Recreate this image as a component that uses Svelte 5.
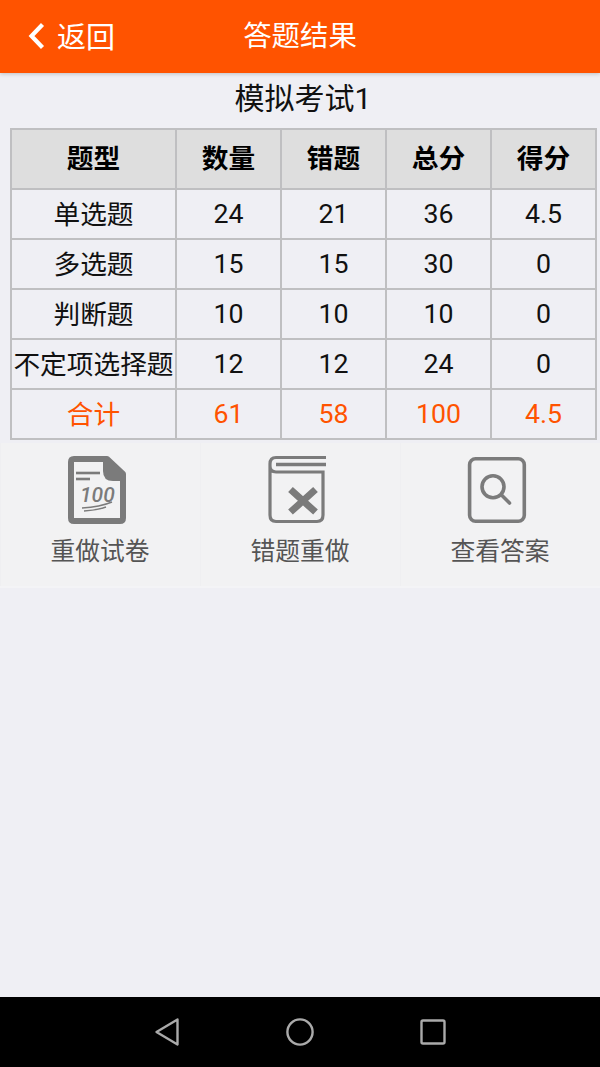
<script>
    const rows = [
        { name: "单选题", count: 24, wrong: 21, total: 36, score: 4.5 },
        { name: "多选题", count: 15, wrong: 15, total: 30, score: 0 },
        { name: "判断题", count: 10, wrong: 10, total: 10, score: 0 },
        { name: "不定项选择题", count: 12, wrong: 12, total: 24, score: 0 }
    ];
</script>

<div class="screen">
    <header class="topbar">
        <div class="back">
            <svg width="18" height="28" viewBox="0 0 18 28">
                <path d="M15.5 2.5 L4.5 14 L15.5 25.5" fill="none" stroke="#fff" stroke-width="4.2" />
            </svg>
            <span>返回</span>
        </div>
        <h1>答题结果</h1>
    </header>

    <main class="content">
        <h2>模拟考试1</h2>

        <table>
            <colgroup>
                <col class="col-name" />
                <col /><col /><col /><col />
            </colgroup>
            <thead>
                <tr>
                    <th>题型</th>
                    <th>数量</th>
                    <th>错题</th>
                    <th>总分</th>
                    <th>得分</th>
                </tr>
            </thead>
            <tbody>
                {#each rows as row}
                    <tr>
                        <td class="name">{row.name}</td>
                        <td>{row.count}</td>
                        <td>{row.wrong}</td>
                        <td>{row.total}</td>
                        <td>{row.score}</td>
                    </tr>
                {/each}
                <tr class="sum">
                    <td class="name">合计</td>
                    <td>61</td>
                    <td>58</td>
                    <td>100</td>
                    <td>4.5</td>
                </tr>
            </tbody>
        </table>

        <div class="actions">
            <div class="action">
                <svg width="90" height="90" viewBox="5 0 90 90">
                    <path d="M24 14 H57 L73 29 V73 Q73 76 70 76 H24 Q21 76 21 73 V17 Q21 14 24 14 Z" fill="none" stroke="#7b7b7b" stroke-width="6" stroke-linejoin="round" />
                    <path d="M53 12 H56 L76 30 V36 H63 Q53 36 53 26 Z" fill="#7b7b7b" />
                    <path d="M26 28 H50" stroke="#7b7b7b" stroke-width="2.6" />
                    <path d="M26 34 H40" stroke="#7b7b7b" stroke-width="2.6" />
                    <text class="hundred" x="30" y="56.5">100</text>
                    <path d="M32 63 Q50 62 62 57 M34 66 Q48 65 56 62" fill="none" stroke="#7b7b7b" stroke-width="1.4" />
                </svg>
                <span>重做试卷</span>
            </div>
            <div class="action">
                <svg width="90" height="90" viewBox="0 0 90 90">
                    <path d="M71 12.5 H21 Q15 12.5 15 19 V70 Q15 76.5 21 76.5 H62 Q68 76.5 68 70 V27 H21 Q15 27 15 21" fill="none" stroke="#7b7b7b" stroke-width="3.2" />
                    <path d="M21 19.5 H71" stroke="#7b7b7b" stroke-width="3.4" />
                    <path d="M35.5 44.5 L60.5 67 M60.5 44.5 L35.5 67" stroke="#7b7b7b" stroke-width="7" />
                </svg>
                <span>错题重做</span>
            </div>
            <div class="action">
                <svg width="90" height="90" viewBox="0 0 90 90">
                    <rect x="14.6" y="13.8" width="54.7" height="62.5" rx="6" fill="none" stroke="#7b7b7b" stroke-width="3.6" />
                    <circle cx="38" cy="41.7" r="11" fill="none" stroke="#7b7b7b" stroke-width="3.6" />
                    <path d="M46.5 50 L54.5 58" stroke="#7b7b7b" stroke-width="3.6" stroke-linecap="round" />
                </svg>
                <span>查看答案</span>
            </div>
        </div>
    </main>

    <nav class="navbar">
        <svg width="26" height="30" viewBox="0 0 26 30">
            <path d="M23.5 2.5 L2.5 15 L23.5 27.5 Z" fill="none" stroke="#aaa" stroke-width="2.4" stroke-linejoin="round" />
        </svg>
        <svg width="30" height="30" viewBox="0 0 30 30">
            <circle cx="15" cy="15" r="12.6" fill="none" stroke="#aaa" stroke-width="2.4" />
        </svg>
        <svg width="26" height="26" viewBox="0 0 26 26">
            <rect x="1.5" y="1.5" width="23" height="23" rx="1.5" fill="none" stroke="#aaa" stroke-width="2.4" />
        </svg>
    </nav>
</div>

<style>
    :global(body) {
        background: #efeff4;
    }

    .screen {
        display: flex;
        flex-direction: column;
        height: 1067px;
        background: #efeff4;
        font-family: Roboto, "Noto Sans CJK SC", sans-serif;
        color: #111;
    }

    .topbar {
        position: relative;
        display: flex;
        align-items: center;
        justify-content: center;
        height: 73px;
        flex: none;
        background: #ff5300;
        color: #fff;
        box-shadow: 0 1px 4px rgba(0, 0, 0, 0.2);
    }

    .topbar h1 {
        margin: 0 0 7px;
        font-size: 28.4px;
        font-weight: 400;
    }

    .back {
        position: absolute;
        left: 27px;
        top: 0;
        height: 73px;
        display: flex;
        align-items: center;
        gap: 12px;
        font-size: 29px;
    }

    .back svg {
        margin-bottom: 1px;
    }

    .back span {
        margin-bottom: 3px;
    }

    .content {
        flex: 1;
    }

    h2 {
        margin: 0;
        padding-left: 6px;
        height: 55px;
        line-height: 52px;
        font-size: 30px;
        font-weight: 400;
        text-align: center;
    }

    table {
        width: 587px;
        margin-left: 10px;
        border-collapse: collapse;
        table-layout: fixed;
        font-size: 26.7px;
        text-align: center;
    }

    .col-name {
        width: 165px;
    }

    tr {
        height: 50px;
    }

    thead tr {
        height: 60px;
    }

    th,
    td {
        border: 2px solid #bfbfc1;
        padding: 0;
        white-space: nowrap;
        overflow: hidden;
    }

    th {
        padding-bottom: 5px;
        background: #dedede;
        font-weight: 700;
        color: #000;
    }

    .name {
        padding-bottom: 4px;
    }

    .sum td {
        color: #ff5300;
    }

    .actions {
        display: grid;
        grid-template-columns: repeat(3, 1fr);
        height: 143px;
        margin-top: 3px;
        background: #f2f2f3;
        border-bottom: 2px solid #f4f4f6;
    }

    .action {
        display: flex;
        flex-direction: column;
        align-items: center;
        font-size: 24.8px;
        color: #555;
        box-shadow: inset 1px 0 #efeff1;
    }

    .action svg {
        display: block;
        margin-top: 2px;
    }

    .action span {
        margin-top: -4px;
    }

    .hundred {
        font-family: Roboto, sans-serif;
        font-style: italic;
        font-size: 21px;
        font-weight: 500;
        fill: #7b7b7b;
    }

    .navbar {
        display: flex;
        align-items: center;
        justify-content: center;
        gap: 105px;
        height: 70px;
        flex: none;
        background: #000;
    }
</style>
